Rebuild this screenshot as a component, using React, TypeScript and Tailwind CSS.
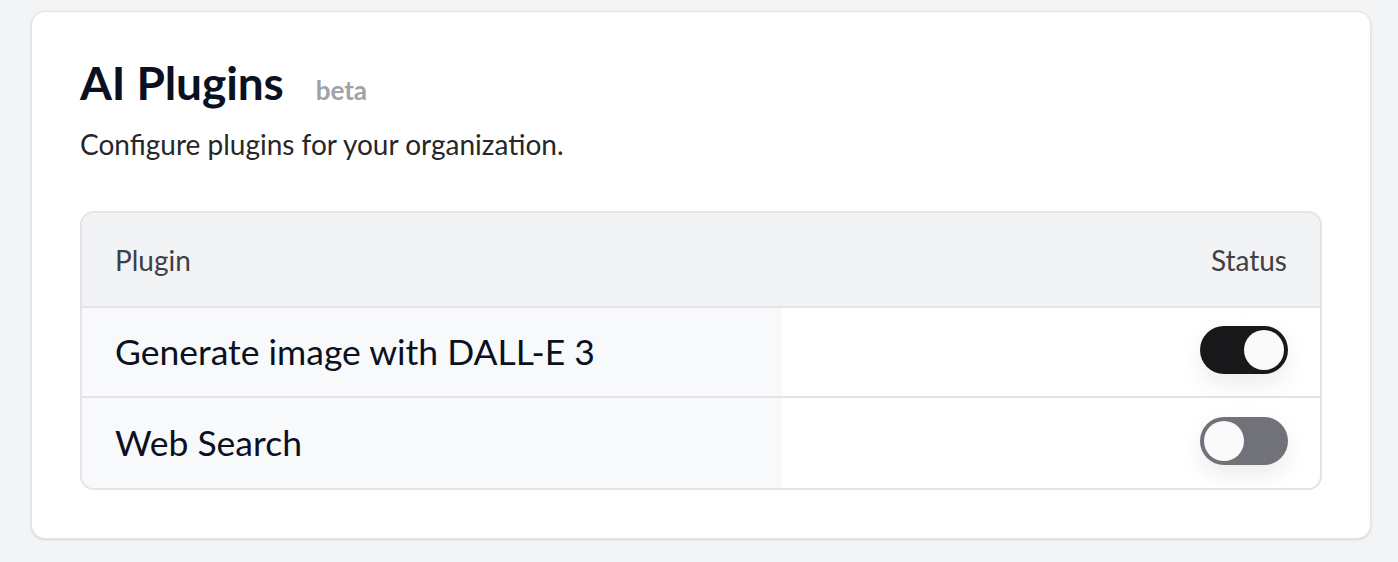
import React, { useState } from 'react';

const plugins = [
  { id: 'dalle', name: 'Generate image with DALL-E 3', enabled: true },
  { id: 'web', name: 'Web Search', enabled: false },
];

const Toggle: React.FC<{ on: boolean; onChange: () => void }> = ({ on, onChange }) => (
  <button
    onClick={onChange}
    className={`mb-[5px] flex h-[48px] w-[88px] items-center rounded-full p-[4px] shadow-[0_10px_24px_rgba(0,0,0,0.08)] ${
      on ? 'justify-end bg-[#18181b]' : 'justify-start bg-[#71717a]'
    }`}
  >
    <span className="block h-[40px] w-[40px] rounded-full bg-[#fafafa]" />
  </button>
);

export default function App() {
  const [state, setState] = useState(plugins);

  const toggle = (id: string) =>
    setState((s) => s.map((p) => (p.id === id ? { ...p, enabled: !p.enabled } : p)));

  return (
    <div className="min-h-[562px] bg-[#f3f4f6] px-[31px] pt-[11px] font-['Lato','Noto_Sans',sans-serif]">
      <div className="w-[1340px] rounded-[14px] border border-[#e4e4e7] bg-white p-[48px] shadow-sm">
        {/* Header */}
        <div className="flex items-baseline">
          <h1 className="text-[46px] font-bold leading-[46px] tracking-[-0.1px] text-[#0b1120]">AI Plugins</h1>
          <span className="ml-[32px] text-[26px] font-bold leading-none text-[#a1a1aa]">beta</span>
        </div>
        <p className="mt-[22px] text-[28px] leading-[32px] text-[#27272a]">Configure plugins for your organization.</p>

        {/* Table */}
        <div className="mt-[51px] overflow-hidden rounded-[14px] border-2 border-[#e4e4e7]">
          <div className="flex h-[95px] items-center justify-between border-b-2 border-[#e4e4e7] bg-[#f2f3f5] px-[33px] text-[28px] text-[#3f3f46]">
            <span>Plugin</span>
            <span>Status</span>
          </div>
          {state.map((p, i) => (
            <div
              key={p.id}
              className={`flex h-[90px] ${i < state.length - 1 ? 'border-b-2 border-[#e4e4e7]' : ''}`}
            >
              <div className="flex w-[700px] items-center bg-[#f8f9fb] px-[33px] text-[35.5px] text-[#0b1120]">
                {p.name}
              </div>
              <div className="flex flex-1 items-center justify-end px-[32px]">
                <Toggle on={p.enabled} onChange={() => toggle(p.id)} />
              </div>
            </div>
          ))}
        </div>
      </div>
    </div>
  );
}
